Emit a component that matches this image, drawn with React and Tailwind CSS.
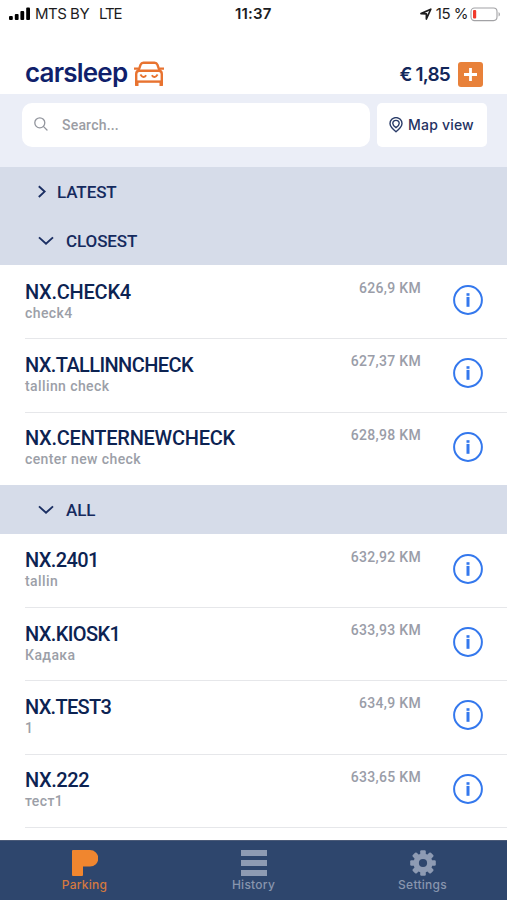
import React from "react";

const closest = [
  { name: "NX.CHECK4", note: "check4", distance: "626,9 KM", spacing: "tracking-[-0.25px]" },
  { name: "NX.TALLINNCHECK", note: "tallinn check", distance: "627,37 KM", spacing: "tracking-[-0.6px]" },
  { name: "NX.CENTERNEWCHECK", note: "center new check", distance: "628,98 KM", spacing: "tracking-[-0.25px]" },
];

const all = [
  { name: "NX.2401", note: "tallin", distance: "632,92 KM", spacing: "tracking-[-0.6px]" },
  { name: "NX.KIOSK1", note: "Кадака", distance: "633,93 KM", spacing: "tracking-[-0.6px]" },
  { name: "NX.TEST3", note: "1", distance: "634,9 KM", spacing: "tracking-[-0.7px]" },
  { name: "NX.222", note: "тест1", distance: "633,65 KM", spacing: "tracking-[-0.4px]" },
];

const StatusBar = () => (
  <div className="relative h-[28px] flex items-center justify-between pl-[9px] pr-[6px] text-[15px] text-[#1c1c1e]">
    <div className="flex items-center">
      <svg width="22" height="14" viewBox="0 0 22 14" fill="#000">
        <rect x="0" y="9" width="3.8" height="4" rx="1" />
        <rect x="5.8" y="7" width="3.8" height="6" rx="1" />
        <rect x="11.4" y="4" width="3.8" height="9" rx="1" />
        <rect x="17.2" y="0.5" width="3.8" height="12.5" rx="1" />
      </svg>
      <span className="ml-[4px] tracking-[-0.5px]">MTS BY</span>
      <span className="ml-[10px] tracking-[-1.2px]">LTE</span>
    </div>
    <span className="absolute left-[235px] font-semibold tracking-[0.2px]">11:37</span>
    <div className="flex items-center">
      <svg width="12" height="12" viewBox="0 0 12 12" fill="none" stroke="#1c1c1e" strokeWidth="1.7" strokeLinejoin="round">
        <path d="M1 5.6 10.8 1.2 6.4 11V5.8Z" />
      </svg>
      <span className="ml-[4px] tracking-[-0.5px]">15 %</span>
      <svg className="ml-[2px]" width="31" height="15" viewBox="0 0 31 15" fill="none">
        <rect x="1" y="1" width="26" height="12.6" rx="3.5" stroke="#a2a2a5" strokeWidth="1.1" />
        <rect x="3" y="3" width="3.2" height="8.6" rx="1" fill="#f0392b" />
        <path d="M28.6 5v4.6c1.8-.8 1.8-3.8 0-4.6Z" fill="#a2a2a5" />
      </svg>
    </div>
  </div>
);

const CarIcon = () => (
  <svg width="30" height="26" viewBox="0 0 30 26" fill="none" stroke="#e87330" strokeWidth="2.4" strokeLinejoin="round">
    <path d="M4.4 9.8 6.6 3.6Q7.4 1.7 9.4 1.7H20.6Q22.6 1.7 23.4 3.6L25.6 9.8" />
    <path d="M0 7.6H4.4M25.6 7.6H30" strokeWidth="2.2" />
    <path d="M2.2 24V13Q2.2 9.8 5.4 9.8H24.6Q27.8 9.8 27.8 13V24" />
    <path d="M2 20.6H28" />
    <path d="M2.8 20.5V25M27.2 20.5V25" strokeWidth="3.4" />
    <path d="M6.4 13.6Q9.3 18.2 12.2 14.2M17.8 14.2Q20.7 18.2 23.6 13.6" strokeWidth="1.9" />
  </svg>
);

const Chevron = ({ open }) =>
  open ? (
    <svg className="mr-[12px]" width="16" height="10" viewBox="0 0 16 10" fill="none" stroke="#1b2f63" strokeWidth="1.9">
      <path d="M1 1.4 8 7.8 15 1.4" />
    </svg>
  ) : (
    <svg className="mr-[11px]" width="8" height="14" viewBox="0 0 8 14" fill="none" stroke="#1b2f63" strokeWidth="1.9">
      <path d="M.8 1.2 6.6 6.6 .8 12" />
    </svg>
  );

const SectionHeader = ({ title, open }) => (
  <div className="h-[49px] bg-[#d6dce9] pl-[38px] pt-px flex items-center text-[17px] font-medium tracking-[-0.1px] text-[#152a5e]">
    <Chevron open={open} />
    <span className="pt-px">{title}</span>
  </div>
);

const ParkingRow = ({ name, note, distance, spacing }) => (
  <div className="ml-[25px] h-[73.3px] border-t border-[#e6e7ea] first:border-transparent flex justify-between">
    <div className="pt-[13.6px]">
      <div className={`text-[20px] leading-[24px] font-medium text-[#0c2352] ${spacing}`}>{name}</div>
      <div className="text-[14px] leading-[18px] font-medium text-[#9c9fa8] tracking-[0.4px]">{note}</div>
    </div>
    <div className="flex pr-[24px]">
      <span className="pt-[13px] text-[14px] leading-[18px] font-medium text-[#9a9da8] tracking-[0.3px]">{distance}</span>
      <svg className="ml-[32px] mt-[19px]" width="30" height="30" viewBox="0 0 30 30" fill="none">
        <circle cx="15" cy="15" r="13.9" stroke="#3478ed" strokeWidth="2" />
        <rect x="13.5" y="8.2" width="3" height="2.6" fill="#3478ed" />
        <rect x="13.5" y="11.9" width="3" height="9.9" fill="#3478ed" />
      </svg>
    </div>
  </div>
);

const GearIcon = () => (
  <svg width="26" height="26" viewBox="-13 -13 26 26" fill="#8e9bb3">
    {[0, 45, 90, 135].map((angle) => (
      <rect key={angle} x="-2.8" y="-12.8" width="5.6" height="25.6" rx="1.2" transform={`rotate(${angle})`} />
    ))}
    <circle r="9.6" />
    <circle r="4.1" fill="#2e466d" />
  </svg>
);

const Tab = ({ label, active, children }) => (
  <div className="flex-1 flex flex-col items-center pt-[9px]">
    <div className="h-[27px]">{children}</div>
    <span className={`text-[12px] leading-[16px] font-medium tracking-[0.25px] ${active ? "text-[#d5793f]" : "text-[#8895ae]"}`}>
      {label}
    </span>
  </div>
);

const App = () => {
  return (
    <div className="w-[507px] h-[900px] bg-white overflow-hidden flex flex-col font-[Roboto,sans-serif]">
      {/* Header */}
      <div className="h-[94px] shrink-0 font-[Inter,sans-serif]">
        <StatusBar />
        <div className="h-[66px] flex items-center justify-between pl-[25px] pr-[24px] pt-[26px]">
          <div className="flex items-center h-[30px]">
            <span className="w-[109px] -mt-[2px] text-[26px] leading-[30px] font-semibold tracking-[-0.8px] text-[#101f6b]">
              carsleep
            </span>
            <CarIcon />
          </div>
          <div className="flex items-center">
            <span className="pt-[2px] text-[19px] font-semibold tracking-[-0.8px] text-[#12275a]">€ 1,85</span>
            <div className="ml-[8px] w-[25px] h-[25px] rounded-[3px] bg-[#e8813a] flex items-center justify-center">
              <svg width="13" height="13" viewBox="0 0 13 13" stroke="#fff" strokeWidth="2.8">
                <path d="M6.5 0v13M0 6.5h13" />
              </svg>
            </div>
          </div>
        </div>
      </div>

      {/* Search */}
      <div className="h-[73px] shrink-0 bg-[#ebeef7] pl-[22px] pr-[20px] pt-[9px] flex items-start gap-[7px]">
        <div className="w-[348px] h-[44px] rounded-[10px] bg-white flex items-center pl-[12px]">
          <svg className="-mt-[2px]" width="14" height="14" viewBox="0 0 14 14" fill="none" stroke="#92959d" strokeWidth="1.3" strokeLinecap="round">
            <circle cx="5.8" cy="5.8" r="5" />
            <path d="m9.6 9.6 3.4 3.4" />
          </svg>
          <span className="ml-[14px] text-[14px] font-medium tracking-[0.2px] text-[#9b9da4]">Search...</span>
        </div>
        <div className="flex-1 h-[44px] rounded-[5px] bg-white flex items-center pl-[12px] pb-px font-[Inter,sans-serif]">
          <svg width="14" height="16" viewBox="0 0 14 16" fill="none" stroke="#2a3c68" strokeWidth="1.4">
            <path d="M7 14.8C4 12.4 1 9.8 1 6.6a6 6 0 0 1 12 0C13 9.8 10 12.4 7 14.8Z" />
            <path d="M7 10.6C5 9.4 3.8 8.2 3.8 6.6a3.2 3.2 0 0 1 6.4 0C10.2 8.2 9 9.4 7 10.6Z" />
          </svg>
          <span className="ml-[5px] text-[14px] font-medium tracking-[0.2px] text-[#1f3262]">Map view</span>
        </div>
      </div>

      {/* Parking list */}
      <div className="h-[673px] shrink-0 overflow-hidden">
        <SectionHeader title="LATEST" />
        <SectionHeader title="CLOSEST" open />
        <div>
          {closest.map((p) => (
            <ParkingRow key={p.name} {...p} />
          ))}
        </div>
        <SectionHeader title="ALL" open />
        <div>
          {all.map((p) => (
            <ParkingRow key={p.name} {...p} />
          ))}
        </div>
        <div className="ml-[25px] border-t border-[#e6e7ea]" />
      </div>

      {/* Tab bar */}
      <div className="h-[60px] shrink-0 bg-[#2e466d] flex border-t border-[#4a5a78] font-[Inter,sans-serif]">
        <Tab label="Parking" active>
          <svg width="26" height="26" viewBox="0 0 26 26" fill="#f0862f">
            <path d="M1 0H18a8.3 8.3 0 0 1 0 16.6H11V25a1 1 0 0 1-1 1H1a1 1 0 0 1-1-1V1a1 1 0 0 1 1-1Z" />
          </svg>
        </Tab>
        <Tab label="History">
          <svg width="26" height="26" viewBox="0 0 26 26" fill="#8e9bb3">
            <rect y="0" width="26" height="6" />
            <rect y="10" width="26" height="6" />
            <rect y="20" width="26" height="6" />
          </svg>
        </Tab>
        <Tab label="Settings">
          <GearIcon />
        </Tab>
      </div>
    </div>
  );
};

export default App;
